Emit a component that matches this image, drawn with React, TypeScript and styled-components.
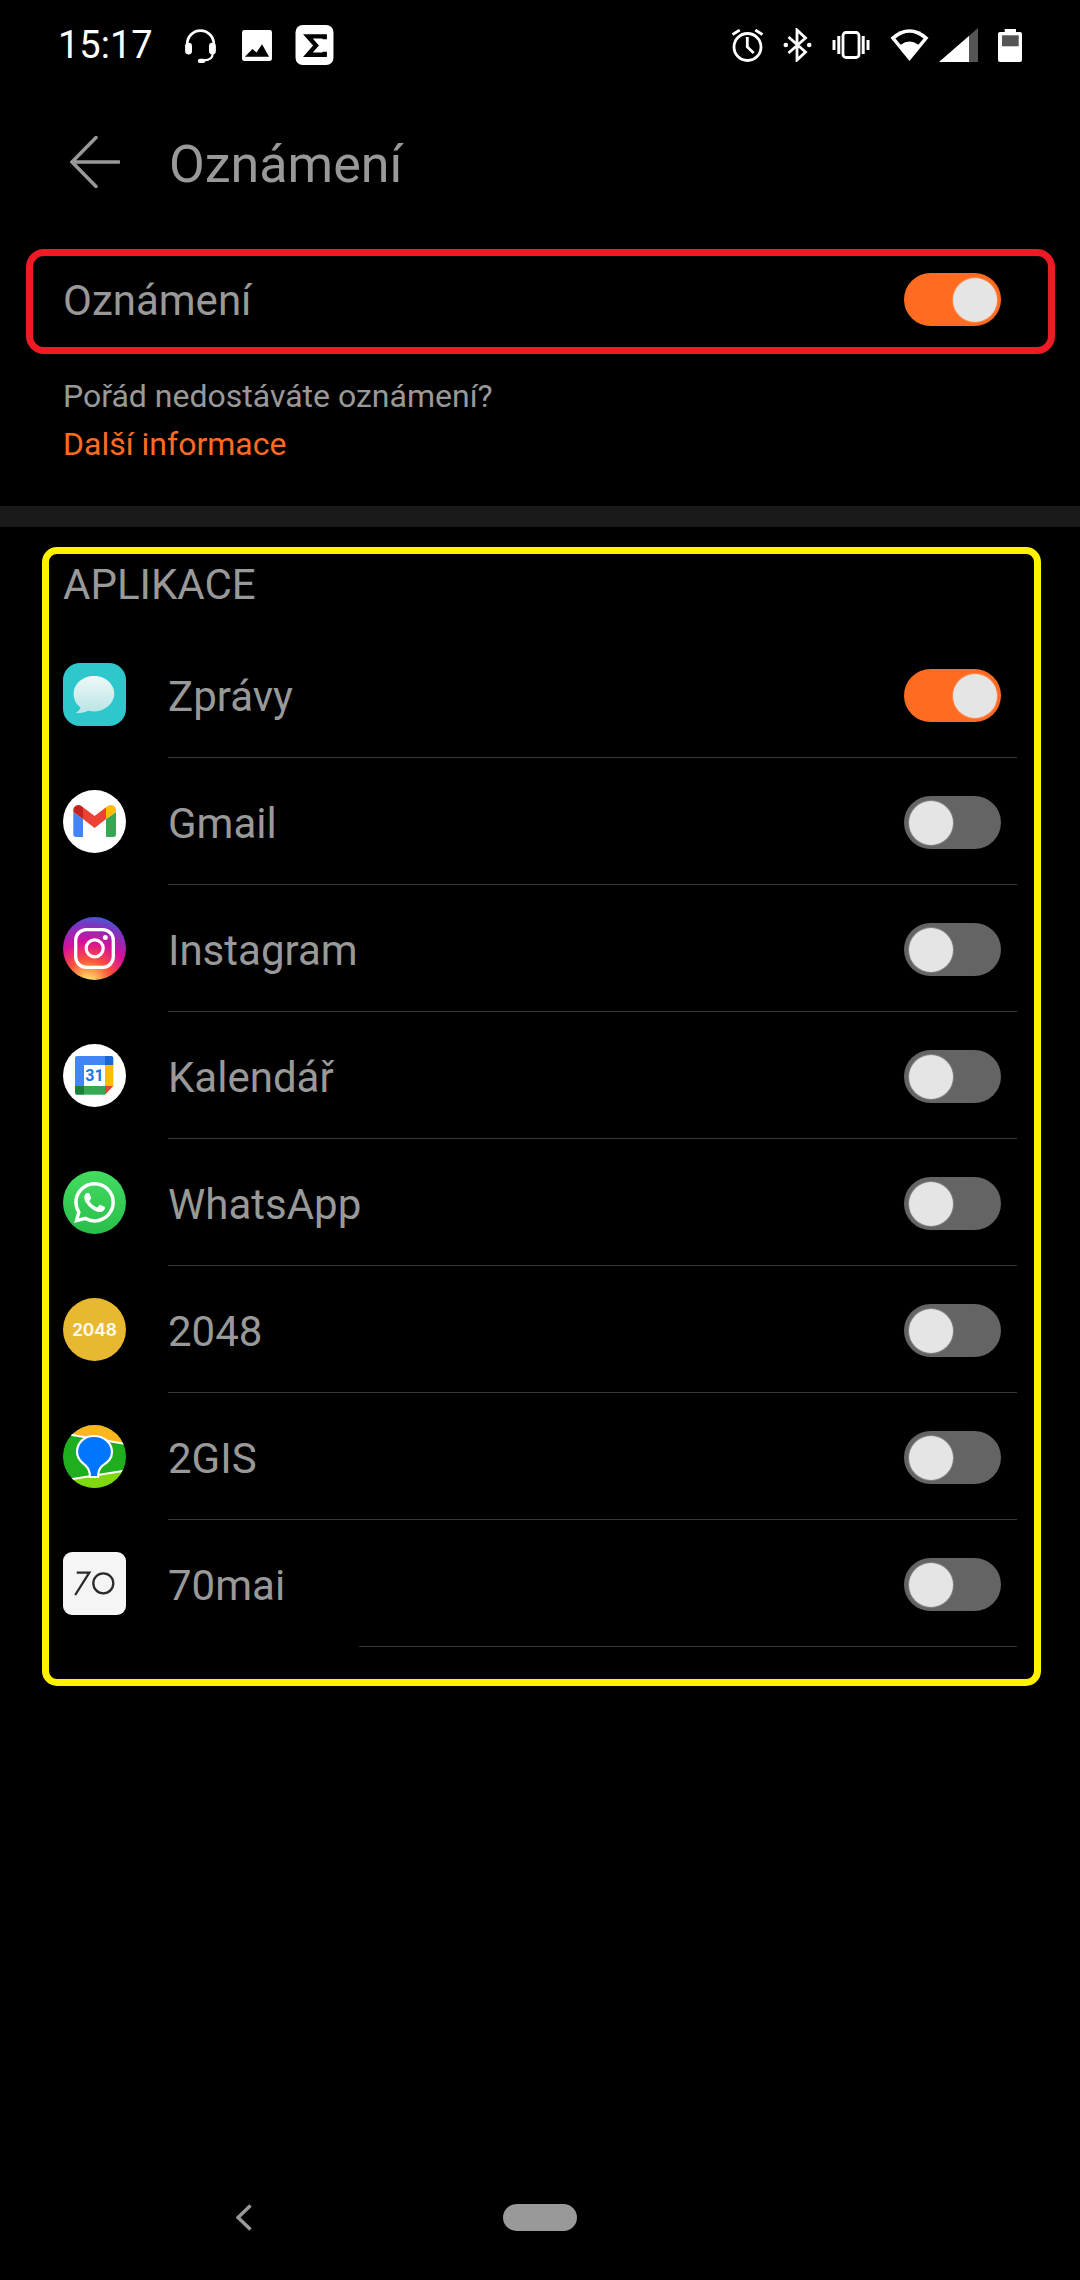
import React from 'react'
import styled, { createGlobalStyle } from 'styled-components'
import { SiWhatsapp } from 'react-icons/si'

const GlobalStyle = createGlobalStyle`
  html, body {
    margin: 0;
    padding: 0;
    background: #000;
  }
  * {
    box-sizing: border-box;
  }
`

const Screen = styled.div`
  width: 1080px;
  height: 2280px;
  background: #000;
  color: #999;
  font-family: Roboto, "Liberation Sans", sans-serif;
  display: flex;
  flex-direction: column;
  overflow: hidden;
`

const StatusBar = styled.div`
  height: 90px;
  padding: 0 58px;
  display: flex;
  align-items: center;
  justify-content: space-between;
`

const StatusLeft = styled.div`
  display: flex;
  align-items: center;
`

const Clock = styled.span`
  width: 122px;
  color: #fff;
  font-size: 38px;
  line-height: 40px;
`

const LeftIcons = styled.div`
  display: flex;
  align-items: center;
  gap: 17px;
`

const LeftIconSlot = styled.div`
  width: 40px;
  height: 40px;
  display: flex;
  align-items: center;
  justify-content: center;
`

const StatusRight = styled.div`
  display: flex;
  align-items: center;
  gap: 20px;
`

const RadioGroup = styled.div`
  display: flex;
  align-items: center;
  gap: 10px;
`

const Header = styled.div`
  height: 144px;
  padding-left: 70px;
  display: flex;
  align-items: center;
  gap: 49px;
`

const Title = styled.h1`
  margin: 6px 0 0;
  font-size: 52px;
  font-weight: 400;
  line-height: 56px;
  color: #999;
`

const MasterBox = styled.div`
  margin: 15px 25px 0 26px;
  height: 105px;
  border: 7px solid #ed1c24;
  border-radius: 18px;
  padding: 0 47px 4px 30px;
  display: flex;
  align-items: center;
  justify-content: space-between;
`

const Label = styled.span`
  font-size: 42px;
  line-height: 48px;
  color: #999;
`

const MasterLabel = styled(Label)`
  margin-top: 3px;
`

const Hint = styled.div`
  padding: 18px 0 38px 63px;
  font-size: 32px;
  line-height: 48px;
`

const MoreLink = styled.div`
  color: #ff6b21;
`

const SectionGap = styled.div`
  height: 21px;
  background: #1a1a1a;
`

const AppsPanel = styled.div`
  margin: 20px 39px 0 42px;
  border: 7px solid #fff200;
  border-radius: 15px;
  padding: 0 17px 32px 14px;
`

const SectionTitle = styled.div`
  height: 77px;
  padding-top: 7px;
  font-size: 42px;
  line-height: 48px;
  color: #999;
`

const RowMain = styled.div`
  height: 126px;
  padding: 32px 16px 0 0;
  display: flex;
  align-items: flex-start;
`

const RowIcon = styled.div`
  width: 63px;
  height: 63px;
  flex: none;
`

const RowLabel = styled(Label)`
  flex: 1;
  margin: 10px 0 0 42px;
`

const RowToggle = styled.div`
  margin-top: 6px;
`

const RowRule = styled.div<{ $inset: number }>`
  height: 1px;
  margin-left: ${p => p.$inset}px;
  background: #383838;
`

const Track = styled.div<{ $on: boolean }>`
  width: 97px;
  height: 53px;
  padding: 0 4px 0 5px;
  border-radius: 27px;
  background: ${p => (p.$on ? '#ff6b21' : '#646464')};
  display: flex;
  align-items: center;
  justify-content: ${p => (p.$on ? 'flex-end' : 'flex-start')};
`

const Knob = styled.div`
  width: 44px;
  height: 44px;
  border-radius: 50%;
  background: #e5e5e5;
  box-shadow: 0 0 0 1px rgba(255, 255, 255, 0.2);
`

const NumberBadge = styled.div`
  width: 63px;
  height: 63px;
  border-radius: 50%;
  background: #e8b830;
  color: #fdf8e8;
  font-family: Inter, sans-serif;
  font-size: 17px;
  font-weight: 700;
  display: flex;
  align-items: center;
  justify-content: center;
`

const WhatsAppBadge = styled.div`
  width: 63px;
  height: 63px;
  border-radius: 50%;
  color: #fff;
  background: linear-gradient(#43dc60, #29be4a);
  display: flex;
  align-items: center;
  justify-content: center;
`

const NavBar = styled.div`
  margin-top: auto;
  height: 126px;
  padding-left: 236px;
  display: flex;
  align-items: center;
  gap: 251px;
`

const HomePill = styled.div`
  width: 74px;
  height: 27px;
  border-radius: 14px;
  background: #999;
`

const Toggle = ({ on }: { on: boolean }) => (
  <Track $on={on}>
    <Knob />
  </Track>
)

const HeadsetIcon = () => (
  <svg width="33" height="35" viewBox="0 0 31 33" fill="none">
    <path d="M3 18V15a12.5 12.5 0 0 1 25 0v3" stroke="#fff" strokeWidth="2.6" />
    <rect x="1" y="14" width="6.5" height="11" rx="3.2" fill="#fff" />
    <rect x="23.5" y="14" width="6.5" height="11" rx="3.2" fill="#fff" />
    <path d="M27 24q0 6-8 6.5" stroke="#fff" strokeWidth="2" />
    <rect x="13" y="29" width="7" height="4" rx="2" fill="#fff" />
  </svg>
)

const GalleryIcon = () => (
  <svg width="30" height="31" viewBox="0 0 28 29">
    <rect width="28" height="29" rx="2" fill="#fff" />
    <path d="M2.7 25l7-7.3 3.8 3.3 5.2-7.7 6.6 11.7z" fill="#000" />
  </svg>
)

const SigmaIcon = () => (
  <svg width="39" height="40" viewBox="0 0 37 39" fill="none">
    <rect width="37" height="39" rx="7" fill="#fff" />
    <path d="M28.5 14v-3H12l8 9-8 9h16.500v-3" stroke="#000" strokeWidth="4.200" />
  </svg>
)

const AlarmIcon = () => (
  <svg width="31" height="33" viewBox="0 0 31 33" fill="none" stroke="#fff" strokeWidth="2.800">
    <circle cx="15.500" cy="18" r="13.500" />
    <path d="M15.300 8v10l6.400 6M.5 5.500 7.700 1M23.300 1l7.200 4.500" />
  </svg>
)

const BluetoothIcon = () => (
  <svg width="29" height="34" viewBox="0 0 28 34" fill="none">
    <path d="M5 9l17 15-8.500 8V2L22 10 5 25" stroke="#fff" strokeWidth="2.800" />
    <circle cx="2.300" cy="17" r="2.300" fill="#fff" />
    <circle cx="25.700" cy="17" r="2.300" fill="#fff" />
  </svg>
)

const VibrateIcon = () => (
  <svg width="38" height="28" viewBox="0 0 38 28" fill="#fff">
    <rect x="11" y="1.500" width="16" height="25" rx="3" fill="none" stroke="#fff" strokeWidth="2.800" />
    <rect x="5.300" y="5" width="3" height="18" />
    <rect x="0.500" y="9" width="3" height="10" />
    <rect x="29.700" y="5" width="3" height="18" />
    <rect x="34.500" y="9" width="3" height="10" />
  </svg>
)

const WifiIcon = () => (
  <svg width="39" height="33" viewBox="0 0 39 33">
    <path d="M.5 8.700Q19.500-8 38.500 8.700L19.500 32z" fill="#fff" />
    <path d="M5.500 9.500Q19.500-2 33.500 9.500l-5.200 6.300Q19.500 9 10.700 15.800z" fill="#000" />
  </svg>
)

const SignalIcon = () => (
  <svg width="39" height="34" viewBox="0 0 39 34">
    <path d="M0 34 39 0v34z" fill="#555" />
    <path d="M0 34 30 7.900V34z" fill="#fff" />
  </svg>
)

const BatteryIcon = () => (
  <svg width="24" height="34" viewBox="0 0 24 34">
    <rect x="6.700" y="1" width="11.300" height="5" fill="#fff" />
    <rect y="4" width="24" height="30" rx="2" fill="#fff" />
    <rect x="4" y="7.300" width="16.700" height="11" fill="#555" />
  </svg>
)

const BackArrow = () => (
  <svg width="50" height="52" viewBox="0 0 50 52" fill="none" stroke="#999" strokeWidth="3.500" strokeLinecap="round">
    <path d="M49 26H2M26 1.500 2 26l24 24.500" />
  </svg>
)

const NavBack = () => (
  <svg width="16" height="27" viewBox="0 0 16 27" fill="none" stroke="#999" strokeWidth="3.500">
    <path d="M14.500 1.500 2 13.500l12.500 12" />
  </svg>
)

const MessagesIcon = () => (
  <svg width="63" height="63" viewBox="0 0 63 63">
    <defs>
      <linearGradient id="bubble" x1="0" y1="0" x2="0" y2="1">
        <stop offset="0" stopColor="#eef8f8" />
        <stop offset="1" stopColor="#b9e4e5" />
      </linearGradient>
    </defs>
    <rect width="63" height="63" rx="17" fill="#2ec7cb" />
    <path
      d="M31 13c11 0 20.300 7.800 20.300 17.500S42 48.500 31 48.500c-2 0-4-.3-5.800-.8-3 1.500-7.500 2.500-12.500 2.300 2.500-1.500 4.300-3.500 4.800-5.500C12.500 41 10.700 36 10.700 30.500 10.700 20.800 20 13 31 13z"
      fill="url(#bubble)"
    />
  </svg>
)

const GmailIcon = () => (
  <svg width="63" height="63" viewBox="0 0 63 63">
    <circle cx="31.500" cy="31.500" r="31.500" fill="#fff" />
    <path d="M10.300 22 20 29v18h-7.300a2.400 2.400 0 0 1-2.400-2.400z" fill="#4285f4" />
    <path d="M53 22l-10 7v18h7.600a2.400 2.400 0 0 0 2.400-2.400z" fill="#34a853" />
    <path d="M10.300 22v-2a5 5 0 0 1 8-4l1.700 1.300V29z" fill="#c5221f" />
    <path d="M53 22v-2a5 5 0 0 0-8-4l-2 1.300V29z" fill="#fbbc04" />
    <path d="M20 17.300 31.600 26 43 17.300V29l-11.400 9L20 29z" fill="#ea4335" />
  </svg>
)

const InstagramIcon = () => (
  <svg width="63" height="63" viewBox="0 0 63 63">
    <defs>
      <radialGradient id="insta" cx="0.4" cy="1.050" r="1.100">
        <stop offset="0" stopColor="#fdf08f" />
        <stop offset="0.120" stopColor="#fdc15a" />
        <stop offset="0.350" stopColor="#fb4e3c" />
        <stop offset="0.600" stopColor="#d6109a" />
        <stop offset="0.850" stopColor="#7a35c0" />
        <stop offset="1" stopColor="#3468e0" />
      </radialGradient>
    </defs>
    <circle cx="31.500" cy="31.500" r="31.500" fill="url(#insta)" />
    <rect x="12.700" y="12.700" width="37.600" height="37.600" rx="10.500" fill="none" stroke="#fff" strokeWidth="3.300" />
    <circle cx="31.700" cy="31.400" r="8.500" fill="none" stroke="#fff" strokeWidth="3.200" />
    <circle cx="42.300" cy="20.400" r="2.500" fill="#fff" />
  </svg>
)

const CalendarIcon = () => (
  <svg width="63" height="63" viewBox="0 0 63 63">
    <circle cx="31.500" cy="31.500" r="31.500" fill="#fff" />
    <path d="M14 12h28v9H21v21h-9V14a2 2 0 0 1 2-2z" fill="#4285f4" />
    <path d="M42 12h6.300a2 2 0 0 1 2 2v7H42z" fill="#1967d2" />
    <rect x="42" y="21" width="8.300" height="21" fill="#fbbc04" />
    <rect x="21" y="42" width="21" height="8.700" fill="#34a853" />
    <path d="M12 42h9v8.700h-7a2 2 0 0 1-2-2z" fill="#188038" />
    <path d="M42 42h8.300L42 50.700z" fill="#ea4335" />
    <text x="31.500" y="37" textAnchor="middle" fontFamily="Roboto, sans-serif" fontWeight="700" fontSize="16" fill="#1a73e8">31</text>
  </svg>
)

const TwoGisIcon = () => (
  <svg width="63" height="63" viewBox="0 0 63 63">
    <defs>
      <clipPath id="gis">
        <circle cx="31.500" cy="31.500" r="31.500" />
      </clipPath>
    </defs>
    <g clipPath="url(#gis)">
      <rect width="63" height="63" fill="#1fae1e" />
      <path d="M0 8.500 63 19V0H0z" fill="#fdb61d" />
      <path d="M0 55.500 63 45.500V63H0z" fill="#7fd80f" />
      <path d="M0 8.500 63 19M0 55.500 63 45.500" stroke="#fff" strokeWidth="2.200" />
    </g>
    <path
      d="M31 11c-10 0-17 7-17 16 0 8 6 11 9 14 3 3 4 6 4 11h8c0-5 1-8 4-11 4-3 10-6 10-14 0-9-8-16-18-16z"
      fill="#0076ff"
      stroke="#fff"
      strokeWidth="2.200"
    />
  </svg>
)

const SeventyMaiIcon = () => (
  <svg width="63" height="63" viewBox="0 0 63 63" fill="none">
    <rect width="63" height="63" rx="9" fill="#f5f5f5" />
    <path d="M13.700 20.700h12.600L12.200 43" stroke="#2a2a2a" strokeWidth="2.300" />
    <circle cx="40.300" cy="31.300" r="10" stroke="#2a2a2a" strokeWidth="2.300" />
  </svg>
)

const apps = [
  { name: 'Zprávy', on: true, icon: <MessagesIcon /> },
  { name: 'Gmail', on: false, icon: <GmailIcon /> },
  { name: 'Instagram', on: false, icon: <InstagramIcon /> },
  { name: 'Kalendář', on: false, icon: <CalendarIcon /> },
  {
    name: 'WhatsApp',
    on: false,
    icon: (
      <WhatsAppBadge>
        <SiWhatsapp size={41} />
      </WhatsAppBadge>
    ),
  },
  { name: '2048', on: false, icon: <NumberBadge>2048</NumberBadge> },
  { name: '2GIS', on: false, icon: <TwoGisIcon /> },
  { name: '70mai', on: false, icon: <SeventyMaiIcon />, ruleInset: 296 },
]

export default function App() {
  return (
    <Screen>
      <GlobalStyle />
      <StatusBar>
        <StatusLeft>
          <Clock>15:17</Clock>
          <LeftIcons>
            <LeftIconSlot><HeadsetIcon /></LeftIconSlot>
            <LeftIconSlot><GalleryIcon /></LeftIconSlot>
            <LeftIconSlot><SigmaIcon /></LeftIconSlot>
          </LeftIcons>
        </StatusLeft>
        <StatusRight>
          <AlarmIcon />
          <BluetoothIcon />
          <VibrateIcon />
          <RadioGroup>
            <WifiIcon />
            <SignalIcon />
          </RadioGroup>
          <BatteryIcon />
        </StatusRight>
      </StatusBar>

      <Header>
        <BackArrow />
        <Title>Oznámení</Title>
      </Header>

      <MasterBox>
        <MasterLabel>Oznámení</MasterLabel>
        <Toggle on />
      </MasterBox>

      <Hint>
        <div>Pořád nedostáváte oznámení?</div>
        <MoreLink>Další informace</MoreLink>
      </Hint>

      <SectionGap />

      <AppsPanel>
        <SectionTitle>APLIKACE</SectionTitle>
        {apps.map(app => (
          <div key={app.name}>
            <RowMain>
              <RowIcon>{app.icon}</RowIcon>
              <RowLabel>{app.name}</RowLabel>
              <RowToggle>
                <Toggle on={app.on} />
              </RowToggle>
            </RowMain>
            <RowRule $inset={app.ruleInset ?? 105} />
          </div>
        ))}
      </AppsPanel>

      <NavBar>
        <NavBack />
        <HomePill />
      </NavBar>
    </Screen>
  )
}
